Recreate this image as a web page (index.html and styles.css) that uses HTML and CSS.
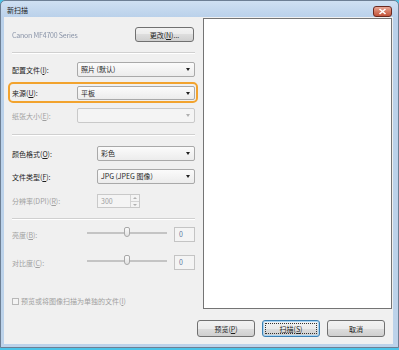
FILE: index.html
```html
<!DOCTYPE html>
<html lang="zh-CN">
<head>
  <meta charset="UTF-8" />
  <title>新扫描</title>
  <link rel="stylesheet" href="styles.css">
</head>
<body>

  <div class="window">
    <div class="titlebar">
      <span class="title">新扫描</span>
      <span class="close">
        <svg width="9" height="7" viewBox="0 0 9 7"><path d="M1.5 1 L7.5 6 M7.5 1 L1.5 6" stroke="#fff" stroke-width="1.6"/></svg>
      </span>
    </div>

    <div class="client">
      <div class="settings">
        <div class="row device">
          <span class="device-name">Canon MF4700 Series</span>
          <button class="btn change">更改(<u>N</u>)...</button>
        </div>
        <hr class="sep">

        <div class="row profile">
          <label class="lbl">配置文件(<u>I</u>):</label>
          <div class="combo">照片 (默认)</div>
        </div>

        <div class="source-box">
          <div class="row source">
            <label class="lbl">来源(<u>U</u>):</label>
            <div class="combo">平板</div>
          </div>
        </div>

        <div class="row paper">
          <label class="lbl off">纸张大小(<u>E</u>):</label>
          <div class="combo disabled"></div>
        </div>
        <hr class="sep sep2">

        <div class="row color">
          <label class="lbl wide">颜色格式(<u>O</u>):</label>
          <div class="combo">彩色</div>
        </div>

        <div class="row filetype">
          <label class="lbl wide">文件类型(<u>F</u>):</label>
          <div class="combo">JPG (JPEG 图像)</div>
        </div>

        <div class="row dpi">
          <label class="lbl wide off">分辨率(DPI)(<u>R</u>):</label>
          <div class="spin">
            <span class="spin-val">300</span>
            <span class="spin-btns"><i class="up"></i><i class="down"></i></span>
          </div>
        </div>
        <hr class="sep sep3">

        <div class="row bright">
          <label class="lbl mid off">亮度(<u>B</u>):</label>
          <div class="slider"><span class="track"></span><span class="thumb"></span></div>
          <div class="value">0</div>
        </div>

        <div class="row contrast">
          <label class="lbl mid off">对比度(<u>C</u>):</label>
          <div class="slider"><span class="track"></span><span class="thumb"></span></div>
          <div class="value">0</div>
        </div>

        <div class="row check">
          <span class="box"></span>
          <span class="off">预览或将图像扫描为单独的文件(<u>I</u>)</span>
        </div>
      </div>

      <div class="preview-col">
        <div class="preview"></div>
        <div class="buttons">
          <button class="btn">预览(<u>P</u>)</button>
          <button class="btn default">扫描(<u>S</u>)</button>
          <button class="btn">取消</button>
        </div>
      </div>
    </div>
  </div>

</body>
</html>
```

FILE: styles.css
```css
body {
  margin: 0;
  background: #4cc4e8;
  font-family: "Noto Sans CJK SC", "Noto Sans", sans-serif;
  font-size: 7px;
  color: #1e1e1e;
}
.window {
  width: 399px;
  height: 348px;
  box-sizing: border-box;
  border: 1px solid #6d7f94;
  border-radius: 5px 5px 0 0;
  background: linear-gradient(#cfe0f2, #bad1ea 16px, #bdd3ea);
  display: flex;
  flex-direction: column;
}
.titlebar {
  height: 16px;
  display: flex;
  justify-content: space-between;
  padding: 0 6px 0 6px;
}
.title {
  line-height: 19px;
  color: #1e1e1e;
}
.close {
  align-self: flex-end;
  width: 19px;
  height: 11px;
  box-sizing: border-box;
  border: 1px solid #6a2a20;
  border-radius: 3px;
  background: linear-gradient(#eaa898, #d57a62 50%, #c2543a);
  display: flex;
  align-items: center;
  justify-content: center;
}
.client {
  flex: 1;
  margin: 0 5px 3px 3px;
  background: #f0f0f0;
  display: flex;
}
.settings {
  width: 194px;
  box-sizing: border-box;
  padding: 10px 3px 0 8px;
  display: flex;
  flex-direction: column;
}
.row {
  display: flex;
  align-items: center;
  height: 15px;
}
.device-name {
  color: #8a94a8;
  filter: blur(0.6px);
  letter-spacing: -0.2px;
  flex: 1;
}
.sep {
  margin: 10px 0 0;
  height: 0;
  border: 0;
  border-top: 1px solid #d0d0d0;
  border-bottom: 1px solid #fff;
}
.sep2 { margin-top: 11px; }
.profile { margin-top: 8px; }
.source-box {
  margin: 5px -3px 0 -4px;
  height: 21px;
  box-sizing: border-box;
  border: 2px solid #f2a32e;
  border-radius: 5px;
  padding: 1px 1px 0 2px;
}
.source { height: 15px; }
.source .combo { height: 14px; }
.paper { margin-top: 5px; }
.color { margin-top: 10px; }
.filetype { margin-top: 8px; }
.dpi { margin-top: 10px; height: 14px; }
.sep3 { margin-top: 10px; }
.bright { margin-top: 7px; }
.contrast { margin-top: 13px; }
.check { margin-top: 26px; height: 10px; }

.lbl {
  width: 65px;
  flex: none;
  white-space: nowrap;
}
.lbl.wide { width: 85px; }
.lbl.mid { width: 75px; }
.off { color: #a0a0a0; }

.combo {
  flex: 1;
  height: 15px;
  box-sizing: border-box;
  border: 1px solid #a9a9a9;
  border-radius: 2px;
  background: linear-gradient(#fbfbfb, #ececec);
  padding-left: 3px;
  line-height: 13px;
  position: relative;
}
.combo::after {
  content: "";
  position: absolute;
  right: 4px;
  top: 5px;
  border-left: 2.5px solid transparent;
  border-right: 2.5px solid transparent;
  border-top: 3px solid #222;
}
.combo.disabled {
  border-color: #c9c9c9;
  background: #f4f4f4;
}
.combo.disabled::after { border-top-color: #b0b0b0; }

.spin {
  width: 43px;
  height: 14px;
  box-sizing: border-box;
  border: 1px solid #c9c9c9;
  background: #f4f4f4;
  display: flex;
}
.spin-val {
  flex: 1;
  color: #a0a0a0;
  padding-left: 3px;
  line-height: 12px;
}
.spin-btns {
  width: 8px;
  display: flex;
  flex-direction: column;
  border-left: 1px solid #d4d4d4;
}
.spin-btns i {
  flex: 1;
  position: relative;
}
.spin-btns .up { border-bottom: 1px solid #d4d4d4; }
.spin-btns i::after {
  content: "";
  position: absolute;
  left: 2px;
  top: 2px;
  border-left: 2px solid transparent;
  border-right: 2px solid transparent;
}
.spin-btns .up::after { border-bottom: 2px solid #b0b0b0; }
.spin-btns .down::after { border-top: 2px solid #b0b0b0; }

.slider {
  width: 80px;
  height: 15px;
  position: relative;
  display: flex;
  align-items: center;
}
.track {
  width: 100%;
  height: 2px;
  border: 1px solid #c4c4c4;
  box-sizing: border-box;
  background: #e4e4e4;
  margin-top: -4px;
}
.thumb {
  position: absolute;
  left: 37px;
  top: 0;
  width: 6px;
  height: 10px;
  box-sizing: border-box;
  border: 1px solid #a8a8a8;
  border-radius: 2px 2px 3px 3px;
  background: linear-gradient(#fafafa, #e2e2e2);
}
.value {
  margin-left: auto;
  width: 21px;
  height: 15px;
  box-sizing: border-box;
  border: 1px solid #c4c4c4;
  background: #f4f4f4;
  color: #5f7a9e;
  padding-left: 4px;
  line-height: 13px;
}
.box {
  width: 7px;
  height: 7px;
  box-sizing: border-box;
  border: 1px solid #b8b8b8;
  background: #f4f4f4;
  margin-right: 2px;
}

.preview-col {
  flex: 1;
  display: flex;
  flex-direction: column;
}
.preview {
  height: 291px;
  margin: 1px 1px 0 5px;
  box-sizing: border-box;
  border: 1px solid #747474;
  background: #fff;
}
.buttons {
  display: flex;
  gap: 7px;
  margin: 11px 0 0 -1px;
}
.btn {
  width: 58px;
  height: 17px;
  padding: 0;
  font: inherit;
  color: #1e1e1e;
  border: 1px solid #707070;
  border-radius: 3px;
  background: linear-gradient(#f2f2f2, #ebebeb 50%, #dddddd 50%, #cfcfcf);
  position: relative;
}
.btn.change {
  width: 59px;
  height: 15px;
  margin-right: 1px;
}
.btn.default {
  border-color: #3c7fb1;
  box-shadow: inset 0 0 0 1px #a8d4f4;
}
.btn.default::after {
  content: "";
  position: absolute;
  inset: 2px;
  border: 1px dotted #333;
}
```
